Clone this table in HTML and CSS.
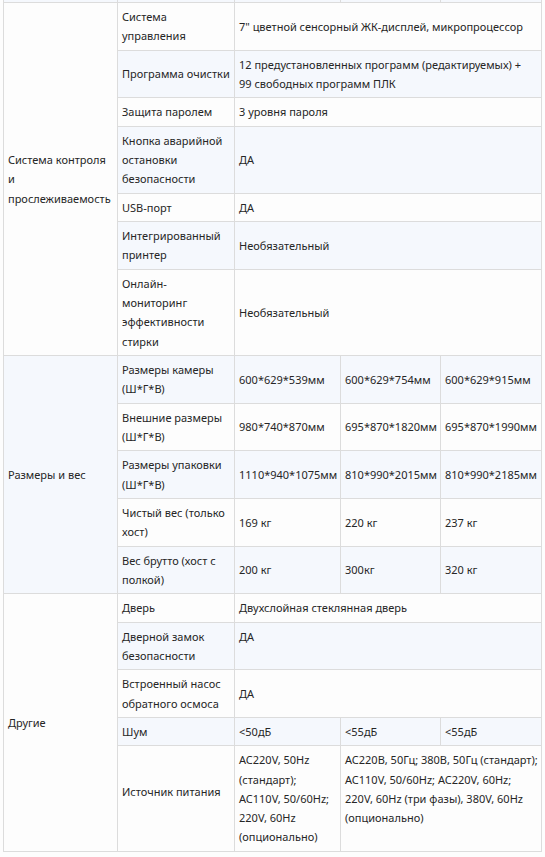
FILE: index.html
```html
<!DOCTYPE html>
<html lang="ru">
<head>
<meta charset="utf-8">
<title>Характеристики</title>
<link rel="stylesheet" href="styles.css">
</head>
<body>
<div class="page">
<table class="spec">
  <colgroup>
    <col class="c1"><col class="c2"><col class="c3"><col class="c4"><col class="c5">
  </colgroup>
  <tbody>
    <tr class="stub"><td></td><td></td><td></td><td></td><td></td></tr>
    <tr><td rowspan="7">Система контроля<br>и<br>прослеживаемость</td><td>Система<br>управления</td><td colspan="3">7" цветной сенсорный ЖК-дисплей, микропроцессор</td></tr>
    <tr><td>Программа очистки</td><td colspan="3">12 предустановленных программ (редактируемых) +<br>99 свободных программ ПЛК</td></tr>
    <tr><td>Защита паролем</td><td colspan="3">3 уровня пароля</td></tr>
    <tr><td>Кнопка аварийной<br>остановки<br>безопасности</td><td colspan="3">ДА</td></tr>
    <tr><td>USB-порт</td><td colspan="3">ДА</td></tr>
    <tr><td>Интегрированный<br>принтер</td><td colspan="3">Необязательный</td></tr>
    <tr><td>Онлайн-<br>мониторинг<br>эффективности<br>стирки</td><td colspan="3">Необязательный</td></tr>
    <tr><td rowspan="5">Размеры и вес</td><td>Размеры камеры<br>(Ш*Г*В)</td><td>600*629*539мм</td><td>600*629*754мм</td><td>600*629*915мм</td></tr>
    <tr><td>Внешние размеры<br>(Ш*Г*В)</td><td>980*740*870мм</td><td>695*870*1820мм</td><td>695*870*1990мм</td></tr>
    <tr><td>Размеры упаковки<br>(Ш*Г*В)</td><td>1110*940*1075мм</td><td>810*990*2015мм</td><td>810*990*2185мм</td></tr>
    <tr><td>Чистый вес (только<br>хост)</td><td>169 кг</td><td>220 кг</td><td>237 кг</td></tr>
    <tr><td>Вес брутто (хост с<br>полкой)</td><td>200 кг</td><td>300кг</td><td>320 кг</td></tr>
    <tr><td rowspan="5">Другие</td><td>Дверь</td><td colspan="3">Двухслойная стеклянная дверь</td></tr>
    <tr><td>Дверной замок<br>безопасности</td><td colspan="3" class="top">ДА</td></tr>
    <tr><td>Встроенный насос<br>обратного осмоса</td><td colspan="3">ДА</td></tr>
    <tr><td>Шум</td><td>&lt;50дБ</td><td>&lt;55дБ</td><td>&lt;55дБ</td></tr>
    <tr><td class="raise">Источник питания</td><td class="top">AC220V, 50Hz<br>(стандарт);<br>AC110V, 50/60Hz;<br>220V, 60Hz<br>(опционально)</td><td colspan="2" class="top">AC220В, 50Гц; 380В, 50Гц (стандарт);<br>AC110V, 50/60Hz; AC220V, 60Hz;<br>220V, 60Hz (три фазы), 380V, 60Hz<br>(опционально)</td></tr>
  </tbody>
</table>
</div>
</body>
</html>
```
FILE: styles.css
```css
html, body {
  margin: 0;
  padding: 0;
  background: #fdfdfd;
}
.page {
  padding: 0 4px 0 3px;
}
.spec {
  width: 538px;
  table-layout: fixed;
  border-collapse: collapse;
  font-family: "Noto Sans", "Open Sans", sans-serif;
  font-size: 11px;
  line-height: 19.33px;
  color: #262626;
}
.c1 { width: 114px; }
.c2 { width: 117px; }
.c3 { width: 106px; }
.c4 { width: 100px; }
.c5 { width: 101px; }
.spec td {
  border: 1px solid #dcdcdc;
  padding: 4px 4px;
  vertical-align: middle;
  background: #fdfdfd;
  white-space: nowrap;
}
.spec tr:nth-child(odd) td {
  background: #f5f8fd;
}
.spec td.top {
  vertical-align: top;
}
.spec td.raise {
  padding-bottom: 17px;
}
.spec tr.stub td {
  padding: 0;
  height: 2px;
  border-top: none;
}
```
